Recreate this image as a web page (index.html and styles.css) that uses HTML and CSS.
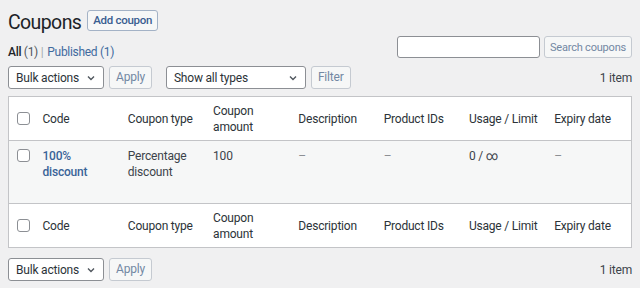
FILE: index.html
```html
<!DOCTYPE html>
<html lang="en">
<head>
    <meta charset="UTF-8">
    <title>Coupons</title>
    <link rel="stylesheet" href="styles.css">
</head>
<body>
<div class="wrap">

    <!-- Page title -->
    <div class="head">
        <h1>Coupons</h1>
        <a href="#" class="btn-add">Add coupon</a>
    </div>

    <!-- Status links and search -->
    <div class="subbar">
        <ul class="subsub">
            <li><a href="#" class="current">All <span class="count">(1)</span></a> |</li>
            <li><a href="#">Published <span class="count">(1)</span></a></li>
        </ul>
        <div class="search">
            <input type="text" class="search-input">
            <button class="btn btn-search">Search coupons</button>
        </div>
    </div>

    <!-- Top table nav -->
    <div class="tablenav">
        <div class="select bulk">
            <span>Bulk actions</span>
            <svg width="10" height="10" viewBox="0 0 10 10"><path d="M2 3.5 L5 6.5 L8 3.5" fill="none" stroke="#50575e" stroke-width="1.4"/></svg>
        </div>
        <button class="btn">Apply</button>
        <div class="select types">
            <span>Show all types</span>
            <svg width="10" height="10" viewBox="0 0 10 10"><path d="M2 3.5 L5 6.5 L8 3.5" fill="none" stroke="#50575e" stroke-width="1.4"/></svg>
        </div>
        <button class="btn">Filter</button>
        <span class="items">1 item</span>
    </div>

    <!-- Coupons table -->
    <table class="list">
        <colgroup>
            <col class="col-check">
            <col span="7">
        </colgroup>
        <thead>
            <tr>
                <td class="check"><span class="box"></span></td>
                <th>Code</th>
                <th>Coupon type</th>
                <th>Coupon amount</th>
                <th>Description</th>
                <th>Product IDs</th>
                <th>Usage / Limit</th>
                <th>Expiry date</th>
            </tr>
        </thead>
        <tbody>
            <tr>
                <td class="check"><span class="box"></span></td>
                <td><a href="#" class="code">100% discount</a></td>
                <td>Percentage discount</td>
                <td>100</td>
                <td class="muted">&ndash;</td>
                <td class="muted">&ndash;</td>
                <td>0 / &infin;</td>
                <td class="muted">&ndash;</td>
            </tr>
        </tbody>
        <tfoot>
            <tr>
                <td class="check"><span class="box"></span></td>
                <th>Code</th>
                <th>Coupon type</th>
                <th>Coupon amount</th>
                <th>Description</th>
                <th>Product IDs</th>
                <th>Usage / Limit</th>
                <th>Expiry date</th>
            </tr>
        </tfoot>
    </table>

    <!-- Bottom table nav -->
    <div class="tablenav bottom">
        <div class="select bulk">
            <span>Bulk actions</span>
            <svg width="10" height="10" viewBox="0 0 10 10"><path d="M2 3.5 L5 6.5 L8 3.5" fill="none" stroke="#50575e" stroke-width="1.4"/></svg>
        </div>
        <button class="btn">Apply</button>
        <span class="items">1 item</span>
    </div>

</div>
</body>
</html>
```

FILE: styles.css
```css
/* General styles */
* {
    box-sizing: border-box;
}

body {
    margin: 0;
    background: #f0f0f1;
    font-family: Roboto, "Noto Sans", sans-serif;
    font-size: 12px;
    letter-spacing: -0.2px;
    color: #3c434a;
}

a {
    text-decoration: none;
}

.wrap {
    padding: 0 8px;
}

/* Title */
.head {
    display: flex;
    align-items: center;
    gap: 6px;
    height: 21px;
    margin-top: 10px;
}

.head h1 {
    margin: 0;
    font-size: 19.5px;
    font-weight: 400;
    line-height: 21px;
    letter-spacing: -0.6px;
    color: #1d2327;
    position: relative;
    top: 2px;
}

.btn-add {
    display: inline-block;
    height: 21px;
    line-height: 19px;
    padding: 0 5px;
    border: 1px solid #a3b2c6;
    border-radius: 3px;
    background: #f6f7f7;
    color: #3a5e91;
    font-weight: 500;
    font-size: 11.5px;
    letter-spacing: -0.3px;
}

/* Status links + search */
.subbar {
    display: flex;
    justify-content: space-between;
    align-items: flex-start;
    margin-top: 5px;
    height: 22px;
}

.subsub {
    list-style: none;
    margin: 8px 0 0;
    padding: 0;
    display: flex;
    gap: 4px;
    line-height: 16px;
    color: #a7aaad;
    letter-spacing: -0.3px;
}

.subsub a {
    color: #3f6a9e;
}

.subsub a.current {
    color: #1d2327;
    font-weight: 500;
}

.subsub a .count {
    color: #3f6a9e;
    font-weight: 400;
}

.subsub a.current .count {
    color: #50575e;
}

.search {
    display: flex;
    gap: 4px;
}

.search-input {
    width: 143px;
    height: 22px;
    border: 1px solid #8c8f94;
    border-radius: 3px;
    background: #fff;
}

/* Buttons */
.btn {
    height: 23px;
    padding: 0 6px;
    border: 1px solid #c5cad1;
    border-radius: 3px;
    background: #f6f7f7;
    color: #7388a3;
    font-family: inherit;
    font-size: 12px;
    letter-spacing: -0.2px;
    line-height: 21px;
}

.btn-search {
    width: 88px;
    height: 22px;
    padding: 0;
    font-size: 11px;
}

/* Table nav */
.tablenav {
    display: flex;
    align-items: center;
    gap: 5px;
    height: 23px;
    margin-top: 8px;
}

.tablenav.bottom {
    margin-top: 10px;
}

.select {
    display: flex;
    align-items: center;
    justify-content: space-between;
    height: 23px;
    padding: 0 7px;
    border: 1px solid #8c8f94;
    border-radius: 3px;
    background: #fff;
    color: #2c3338;
}

.select.bulk {
    width: 96px;
}

.select.types {
    width: 140px;
    margin-left: 9px;
}

.items {
    margin-left: auto;
    color: #3c434a;
}

/* Coupons list */
.list {
    width: 100%;
    margin-top: 7px;
    table-layout: fixed;
    border-collapse: collapse;
    border: 1px solid #c3c4c7;
    background: #fff;
}

.col-check {
    width: 26px;
}

.list th,
.list td {
    text-align: left;
    font-weight: 400;
    line-height: 16px;
}

.list thead th,
.list thead td,
.list tfoot th,
.list tfoot td {
    height: 44px;
    padding: 0 8px;
    vertical-align: middle;
    color: #2c3338;
}

.list thead tr {
    border-bottom: 1px solid #c3c4c7;
}

.list tfoot tr {
    border-top: 1px solid #c3c4c7;
}

.list tbody td {
    padding: 7px 8px 23px;
    vertical-align: top;
    background: #f6f7f7;
}

.list td.check {
    padding-left: 8px;
    padding-right: 0;
}

.list tbody td.check {
    padding-top: 8px;
}

.box {
    display: block;
    width: 13px;
    height: 13px;
    border: 1px solid #8c8f94;
    border-radius: 3px;
    background: #fff;
}

.code {
    color: #3a6498;
    font-weight: 500;
}

.muted {
    color: #8c8f94;
}
```
